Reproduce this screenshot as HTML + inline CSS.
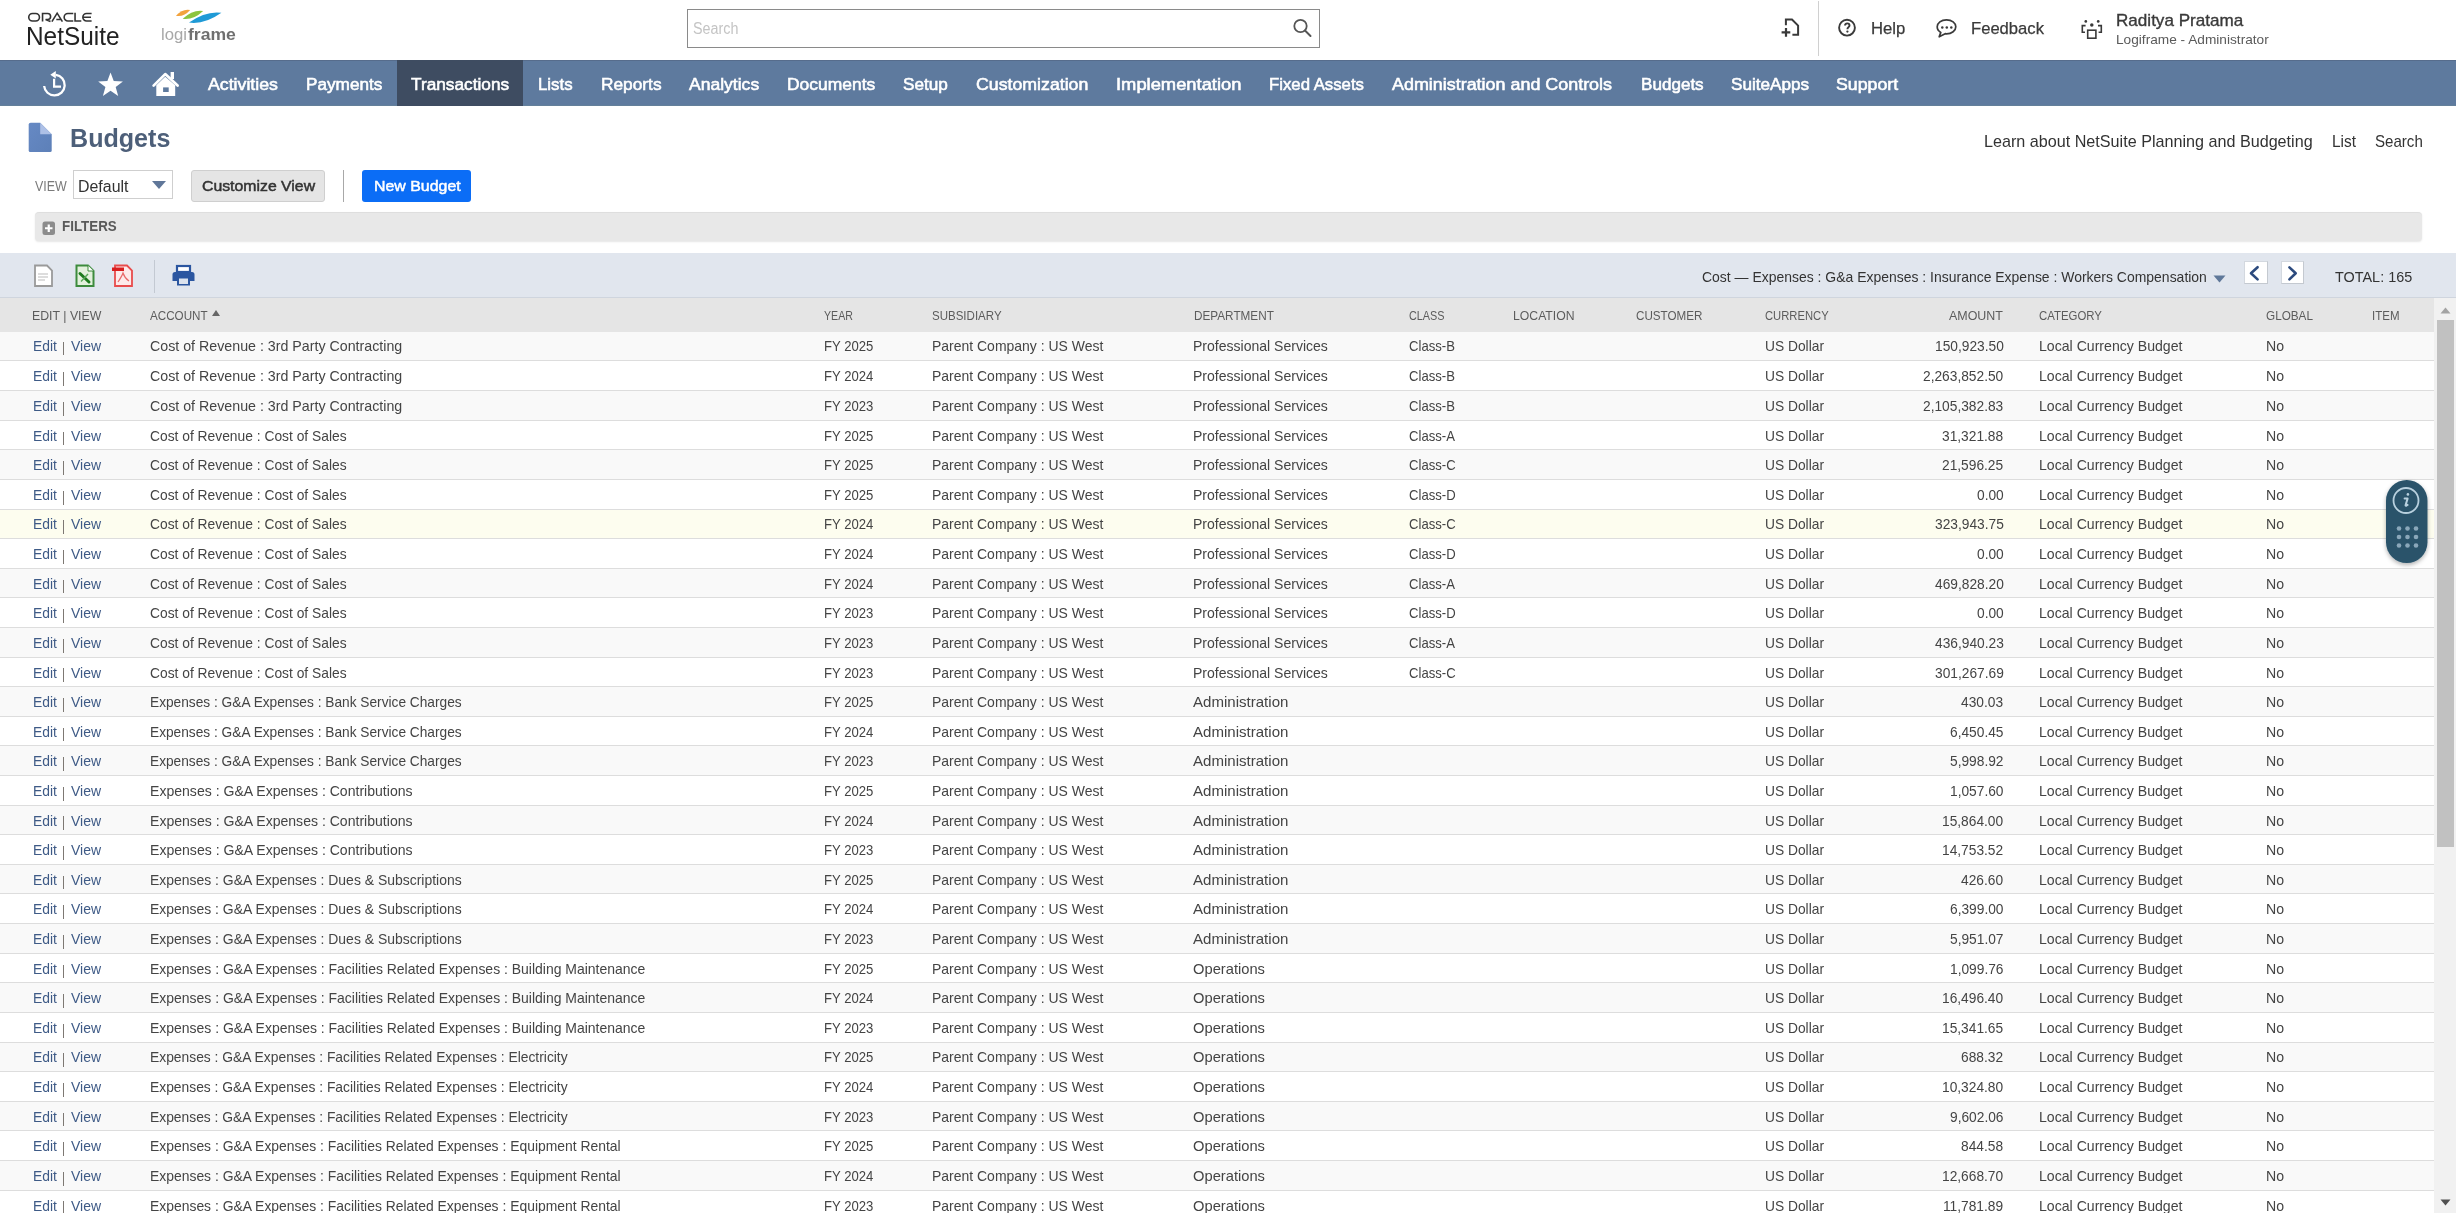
<!DOCTYPE html>
<html><head><meta charset="utf-8"><title>Budgets</title>
<style>
html,body{margin:0;padding:0;background:#fff;width:2457px;height:1213px;overflow:hidden;position:relative}
body{font-family:"Liberation Sans",sans-serif}
.t{position:absolute;white-space:nowrap;transform-origin:0 0;display:block}
.r{position:absolute;display:block}
</style></head><body>
<svg class="r" style="left:27px;top:11px" width="66" height="12" viewBox="0 0 66 12" fill="none" stroke="#333" stroke-width="1.6">
<rect x="1.75" y="2.45" width="10.7" height="7.5" rx="3.75"/>
<path d="M15.55 10.6 V2.45 H20.6 A3 3 0 0 1 20.6 8.45 H18.6 L23.5 10.6"/>
<path d="M24.9 10.6 L30.15 2.2 L35.4 10.6 M29.3 8.5 H33.9"/>
<path d="M46.3 2.45 H40.9 A3.75 3.75 0 0 0 40.9 9.95 H46.3"/>
<path d="M48.05 1.8 V9.95 H54.3"/>
<path d="M64.6 2.45 H59.6 A3.75 3.75 0 0 0 59.6 9.95 H64.6 M56.6 6.2 H64"/>
</svg>
<span class="t" style="left:26.30px;top:22.54px;font-size:26.00px;line-height:26.00px;color:#222;transform:scaleX(0.9377);">NetSuite</span>
<svg class="r" style="left:170px;top:6px" width="60" height="22" viewBox="0 0 60 22"><path d="M5.90 9.80 Q13.56 11.44 20.20 4.00 Q12.54 2.36 5.90 9.80Z" fill="#f2a23c"/><path d="M12.70 12.80 Q23.16 14.38 33.20 5.00 Q22.74 3.42 12.70 12.80Z" fill="#8cc43f"/><path d="M19.00 16.60 Q34.52 18.80 51.40 6.80 Q35.88 4.60 19.00 16.60Z" fill="#1f9ad6"/></svg>
<span class="t" style="left:161.00px;top:25.66px;font-size:16.50px;line-height:16.50px;color:#a8a8a8;transform:scaleX(1.0120);">logi</span>
<span class="t" style="left:187.80px;top:25.66px;font-size:16.50px;line-height:16.50px;font-weight:bold;color:#707070;transform:scaleX(1.0657);">frame</span>
<div class="r" style="left:687px;top:9px;width:633px;height:39px;border:1px solid #8a8a8a;box-sizing:border-box;background:#fff"></div>
<span class="t" style="left:693.00px;top:20.67px;font-size:15.80px;line-height:15.80px;color:#c4c4c4;transform:scaleX(0.9070);">Search</span>
<svg class="r" style="left:1290px;top:16px" width="26" height="26" viewBox="0 0 26 26">
<circle cx="10.5" cy="10" r="6.2" fill="none" stroke="#555" stroke-width="1.8"/>
<line x1="15" y1="14.5" x2="20.5" y2="20" stroke="#555" stroke-width="2" stroke-linecap="round"/></svg>
<svg class="r" style="left:1779px;top:16px" width="24" height="24" viewBox="0 0 24 24">
<path d="M6.9 9.2 V3.5 H13 L19.1 9.6 V18.8 H13.4" fill="none" stroke="#3a3a3a" stroke-width="2" stroke-linejoin="miter"/>
<path d="M2.6 16.4 H11.3 M7 12 V20.8" stroke="#3a3a3a" stroke-width="2.2"/></svg>
<div class="r" style="left:1818px;top:1px;width:1px;height:55px;background:#d0d0d0"></div>
<svg class="r" style="left:1836px;top:17px" width="22" height="22" viewBox="0 0 22 22">
<circle cx="11" cy="10.7" r="7.9" fill="none" stroke="#3a3a3a" stroke-width="1.9"/>
<path d="M9 8.6 C9 7.1 10 6.4 11.2 6.4 C12.6 6.4 13.5 7.2 13.5 8.4 C13.5 10 11.4 10.3 11.4 12.2" fill="none" stroke="#3a3a3a" stroke-width="1.9"/>
<circle cx="11.4" cy="14.6" r="1.15" fill="#3a3a3a"/></svg>
<span class="t" style="left:1871.00px;top:21.14px;font-size:16.60px;line-height:16.60px;-webkit-text-stroke:0.25px #3a3a3a;color:#3a3a3a;transform:scaleX(1.0045);">Help</span>
<svg class="r" style="left:1934px;top:16px" width="26" height="24" viewBox="0 0 26 24">
<path d="M12.5 3.8 C7.2 3.8 3.2 6.9 3.2 10.8 C3.2 13.2 4.6 15.2 6.8 16.4 L5.2 20.8 L11.2 17.7 C11.6 17.75 12 17.8 12.5 17.8 C17.8 17.8 21.8 14.7 21.8 10.8 C21.8 6.9 17.8 3.8 12.5 3.8Z" fill="none" stroke="#3a3a3a" stroke-width="1.7" stroke-linejoin="round"/>
<circle cx="8.3" cy="11.4" r="1.25" fill="#3a3a3a"/><circle cx="12.8" cy="11.4" r="1.25" fill="#3a3a3a"/><circle cx="17.3" cy="11.4" r="1.25" fill="#3a3a3a"/></svg>
<span class="t" style="left:1971.00px;top:21.14px;font-size:16.60px;line-height:16.60px;-webkit-text-stroke:0.25px #3a3a3a;color:#3a3a3a;transform:scaleX(1.0008);">Feedback</span>
<svg class="r" style="left:2079px;top:17px" width="26" height="24" viewBox="0 0 26 24">
<circle cx="6.8" cy="4.4" r="1.35" fill="#3a3a3a"/><circle cx="19.2" cy="4.4" r="1.35" fill="#3a3a3a"/><circle cx="12.8" cy="8.1" r="1.75" fill="#3a3a3a"/>
<path d="M6.6 8.6 H3.3 V15.3 H6 M19 8.6 H22.3 V15.3 H19.6" fill="none" stroke="#3a3a3a" stroke-width="1.6"/>
<rect x="8.7" y="13.2" width="8.2" height="8" fill="none" stroke="#3a3a3a" stroke-width="1.6"/></svg>
<span class="t" style="left:2115.70px;top:11.98px;font-size:16.40px;line-height:16.40px;-webkit-text-stroke:0.35px #3a3a3a;color:#3a3a3a;transform:scaleX(1.0420);">Raditya Pratama</span>
<span class="t" style="left:2115.70px;top:33.55px;font-size:12.80px;line-height:12.80px;color:#5a5a5a;transform:scaleX(1.0686);">Logiframe - Administrator</span>
<div class="r" style="left:0px;top:60px;width:2456px;height:46px;background:#5e7a9e;border-top:1px solid #566c8c;border-bottom:1px solid #64809a;box-sizing:border-box"></div>
<div class="r" style="left:397px;top:60px;width:126px;height:46px;background:#3e4c61"></div>
<svg class="r" style="left:40px;top:68px" width="30" height="32" viewBox="0 0 30 32">
<path d="M4.14 18 A10.3 10.3 0 1 0 15.83 6.9" fill="none" stroke="#fff" stroke-width="2.3"/>
<path d="M10.3 6.8 L15.8 3.0 L15.8 10.6Z" fill="#fff"/>
<path d="M14.1 10.8 V18.7 H21" fill="none" stroke="#fff" stroke-width="2.2"/></svg>
<svg class="r" style="left:96px;top:71px" width="30" height="28" viewBox="0 0 30 28">
<polygon points="14.55,1.40 17.72,10.03 26.91,10.38 19.69,16.07 22.19,24.92 14.55,19.80 6.91,24.92 9.41,16.07 2.19,10.38 11.38,10.03" fill="#fff"/></svg>
<svg class="r" style="left:150px;top:68px" width="32" height="32" viewBox="0 0 32 32">
<rect x="20.6" y="4" width="3.4" height="7" fill="#fff"/>
<path d="M3.6 17.6 L15.2 6.1 L27.6 17.6" fill="none" stroke="#fff" stroke-width="2.7" stroke-linejoin="round" stroke-linecap="round"/>
<path d="M6.3 17.2 L15.2 8.8 L25.2 17.2 V27.9 H6.3Z" fill="#fff"/>
<rect x="13.1" y="19.4" width="5.6" height="4.6" fill="#5e7a9e"/></svg>
<span class="t" style="left:207.60px;top:75.51px;font-size:16.20px;line-height:16.20px;-webkit-text-stroke:0.55px #fff;color:#fff;transform:scaleX(1.0953);">Activities</span>
<span class="t" style="left:306.20px;top:75.51px;font-size:16.20px;line-height:16.20px;-webkit-text-stroke:0.55px #fff;color:#fff;transform:scaleX(1.0607);">Payments</span>
<span class="t" style="left:411.00px;top:75.51px;font-size:16.20px;line-height:16.20px;-webkit-text-stroke:0.55px #fff;color:#fff;transform:scaleX(1.0657);">Transactions</span>
<span class="t" style="left:537.70px;top:75.51px;font-size:16.20px;line-height:16.20px;-webkit-text-stroke:0.55px #fff;color:#fff;transform:scaleX(1.0388);">Lists</span>
<span class="t" style="left:600.50px;top:75.51px;font-size:16.20px;line-height:16.20px;-webkit-text-stroke:0.55px #fff;color:#fff;transform:scaleX(1.0685);">Reports</span>
<span class="t" style="left:688.70px;top:75.51px;font-size:16.20px;line-height:16.20px;-webkit-text-stroke:0.55px #fff;color:#fff;transform:scaleX(1.0831);">Analytics</span>
<span class="t" style="left:787.00px;top:75.51px;font-size:16.20px;line-height:16.20px;-webkit-text-stroke:0.55px #fff;color:#fff;transform:scaleX(1.0776);">Documents</span>
<span class="t" style="left:903.00px;top:75.51px;font-size:16.20px;line-height:16.20px;-webkit-text-stroke:0.55px #fff;color:#fff;transform:scaleX(1.0607);">Setup</span>
<span class="t" style="left:975.50px;top:75.51px;font-size:16.20px;line-height:16.20px;-webkit-text-stroke:0.55px #fff;color:#fff;transform:scaleX(1.0951);">Customization</span>
<span class="t" style="left:1115.50px;top:75.51px;font-size:16.20px;line-height:16.20px;-webkit-text-stroke:0.55px #fff;color:#fff;transform:scaleX(1.1331);">Implementation</span>
<span class="t" style="left:1269.00px;top:75.51px;font-size:16.20px;line-height:16.20px;-webkit-text-stroke:0.55px #fff;color:#fff;transform:scaleX(1.0344);">Fixed Assets</span>
<span class="t" style="left:1391.80px;top:75.51px;font-size:16.20px;line-height:16.20px;-webkit-text-stroke:0.55px #fff;color:#fff;transform:scaleX(1.1065);">Administration and Controls</span>
<span class="t" style="left:1640.50px;top:75.51px;font-size:16.20px;line-height:16.20px;-webkit-text-stroke:0.55px #fff;color:#fff;transform:scaleX(1.0549);">Budgets</span>
<span class="t" style="left:1730.80px;top:75.51px;font-size:16.20px;line-height:16.20px;-webkit-text-stroke:0.55px #fff;color:#fff;transform:scaleX(1.0588);">SuiteApps</span>
<span class="t" style="left:1836.30px;top:75.51px;font-size:16.20px;line-height:16.20px;-webkit-text-stroke:0.55px #fff;color:#fff;transform:scaleX(1.0964);">Support</span>
<svg class="r" style="left:28px;top:122px" width="26" height="32" viewBox="0 0 26 32">
<defs><linearGradient id="dg" x1="0" y1="0" x2="1" y2="1"><stop offset="0" stop-color="#6689c4"/><stop offset="1" stop-color="#5d80b8"/></linearGradient></defs>
<path d="M2.6 0.8 H12.2 L23.7 12.3 V28.4 Q23.7 29.9 22.2 29.9 H2.2 Q0.7 29.9 0.7 28.4 V2.6 Q0.7 0.8 2.6 0.8Z" fill="url(#dg)"/>
<path d="M12.2 0.8 L23.7 12.3 H12.2Z" fill="#adc0e6"/></svg>
<span class="t" style="left:69.80px;top:126.12px;font-size:25.50px;line-height:25.50px;font-weight:bold;color:#4d5f79;transform:scaleX(0.9843);">Budgets</span>
<span class="t" style="left:1983.90px;top:132.91px;font-size:16.20px;line-height:16.20px;color:#333;transform:scaleX(0.9977);">Learn about NetSuite Planning and Budgeting</span>
<span class="t" style="left:2332.00px;top:132.91px;font-size:16.20px;line-height:16.20px;color:#333;transform:scaleX(0.9521);">List</span>
<span class="t" style="left:2375.30px;top:132.91px;font-size:16.20px;line-height:16.20px;color:#333;transform:scaleX(0.9314);">Search</span>
<span class="t" style="left:34.60px;top:179.36px;font-size:14.00px;line-height:14.00px;color:#7a7a7a;transform:scaleX(0.8887);">VIEW</span>
<div class="r" style="left:73px;top:170px;width:100px;height:29px;border:1px solid #cfcfcf;box-sizing:border-box;background:#fff"></div>
<span class="t" style="left:78.20px;top:178.80px;font-size:15.60px;line-height:15.60px;color:#333;transform:scaleX(1.0218);">Default</span>
<svg class="r" style="left:151px;top:180px" width="16" height="10" viewBox="0 0 16 10"><path d="M1 1 H15 L8 9Z" fill="#607799"/></svg>
<div class="r" style="left:191px;top:170px;width:134px;height:32px;background:#e5e5e5;border:1px solid #cfcfcf;box-sizing:border-box;border-radius:3px"></div>
<span class="t" style="left:201.70px;top:178.34px;font-size:15.40px;line-height:15.40px;-webkit-text-stroke:0.5px #333;color:#333;transform:scaleX(1.0275);">Customize View</span>
<div class="r" style="left:343px;top:170px;width:1px;height:32px;background:#a8a8a8"></div>
<div class="r" style="left:362px;top:170px;width:109px;height:32px;background:#0b6df6;border-radius:3px"></div>
<span class="t" style="left:373.50px;top:178.34px;font-size:15.40px;line-height:15.40px;-webkit-text-stroke:0.5px #fff;color:#fff;transform:scaleX(1.0334);">New Budget</span>
<div class="r" style="left:35px;top:212px;width:2387px;height:29px;background:#e8e8e8;border-radius:4px;border-top:1px solid #dedede;box-sizing:border-box;box-shadow:0 1px 2px rgba(0,0,0,0.10)"></div>
<svg class="r" style="left:42px;top:221px" width="14" height="15" viewBox="0 0 14 15">
<rect x="0.5" y="0.5" width="12.5" height="13.5" rx="2.5" fill="#8c8c8c"/>
<path d="M6.75 3.5 V11 M3 7.25 H10.5" stroke="#fff" stroke-width="2.2"/></svg>
<span class="t" style="left:62.30px;top:219.06px;font-size:14.60px;line-height:14.60px;font-weight:bold;color:#5a5a5a;transform:scaleX(0.9173);">FILTERS</span>
<div class="r" style="left:0px;top:253px;width:2456px;height:45px;background:#e1e6ee;border-bottom:1px solid #cfd5de;box-sizing:border-box"></div>
<svg class="r" style="left:33px;top:264px" width="22" height="24" viewBox="0 0 22 24">
<path d="M2 1.5 H14 L19 6.5 V22 H2Z" fill="#fff" stroke="#9a9a9a" stroke-width="1.8"/>
<path d="M5 10 H15 M5 13 H15 M5 16 H12" stroke="#bbb" stroke-width="1"/></svg>
<svg class="r" style="left:74px;top:264px" width="22" height="24" viewBox="0 0 22 24">
<path d="M2.5 1.5 H14 L19.5 7 V22 H2.5Z" fill="#e3f1dc" stroke="#3d8b3d" stroke-width="2"/>
<path d="M14 1.5 V7 H19.5" fill="#fff" stroke="#3d8b3d" stroke-width="1"/>
<path d="M6 9.5 L15 18" stroke="#1d7a1d" stroke-width="3" stroke-linecap="round"/>
<path d="M14 10 L7 17.5" stroke="#5aa85a" stroke-width="1.4"/></svg>
<svg class="r" style="left:111px;top:264px" width="24" height="24" viewBox="0 0 24 24">
<path d="M4 1.5 H16 L21 6.5 V22 H4Z" fill="#fdeaea" stroke="#e84c4c" stroke-width="1.8"/>
<rect x="1" y="3.5" width="12" height="3.5" fill="#d91e1e"/>
<path d="M7 18 C9 15 11 12 12 9 C13 12 15 15 18 17" fill="none" stroke="#e86a6a" stroke-width="1.2"/></svg>
<div class="r" style="left:154px;top:260px;width:1px;height:33px;background:#c3c9d2"></div>
<svg class="r" style="left:171px;top:264px" width="25" height="24" viewBox="0 0 25 24">
<rect x="6" y="2" width="13" height="6" fill="#fff" stroke="#2b56a0" stroke-width="2.2"/>
<path d="M4 8 H21 Q23.5 8 23.5 10.5 V17 H19 V21.5 H6 V17 H1.5 V10.5 Q1.5 8 4 8Z" fill="#2b56a0"/>
<rect x="8" y="14.5" width="9" height="5.5" fill="#dce3ee"/></svg>
<span class="t" style="left:1701.60px;top:269.70px;font-size:14.40px;line-height:14.40px;color:#333;transform:scaleX(0.9701);">Cost — Expenses : G&amp;a Expenses : Insurance Expense : Workers Compensation</span>
<svg class="r" style="left:2213px;top:275px" width="13" height="8" viewBox="0 0 13 8"><path d="M0.5 0.5 H12.5 L6.5 7.5Z" fill="#5f7899"/></svg>
<div class="r" style="left:2244px;top:261px;width:24px;height:23px;background:#fff;border:1px solid #d3d8df;border-right-color:#c4c9d0;border-bottom-color:#c4c9d0;box-sizing:border-box"></div>
<div class="r" style="left:2281px;top:261px;width:23px;height:23px;background:#fff;border:1px solid #d3d8df;border-right-color:#c4c9d0;border-bottom-color:#c4c9d0;box-sizing:border-box"></div>
<svg class="r" style="left:2240px;top:260px" width="28" height="26" viewBox="0 0 28 26"><path d="M17.6 7.2 L11 13.3 L17.6 19.4" fill="none" stroke="#2c4a7e" stroke-width="2.6" stroke-linecap="round" stroke-linejoin="round"/></svg>
<svg class="r" style="left:2280px;top:260px" width="28" height="26" viewBox="0 0 28 26"><path d="M9.4 7.4 L15.7 13.3 L9.4 19.4" fill="none" stroke="#2c4a7e" stroke-width="2.6" stroke-linecap="round" stroke-linejoin="round"/></svg>
<span class="t" style="left:2334.80px;top:269.00px;font-size:15.00px;line-height:15.00px;color:#333;transform:scaleX(0.9611);">TOTAL: 165</span>
<div class="r" style="left:0px;top:298px;width:2434px;height:34px;background:#e5e5e5"></div>
<span class="t" style="left:32.20px;top:310.18px;font-size:12.60px;line-height:12.60px;color:#5c5c5c;transform:scaleX(0.9781);">EDIT | VIEW</span>
<span class="t" style="left:150.40px;top:310.18px;font-size:12.60px;line-height:12.60px;color:#5c5c5c;transform:scaleX(0.9246);">ACCOUNT</span>
<span class="t" style="left:824.40px;top:310.18px;font-size:12.60px;line-height:12.60px;color:#5c5c5c;transform:scaleX(0.8423);">YEAR</span>
<span class="t" style="left:931.90px;top:310.18px;font-size:12.60px;line-height:12.60px;color:#5c5c5c;transform:scaleX(0.9147);">SUBSIDIARY</span>
<span class="t" style="left:1193.80px;top:310.18px;font-size:12.60px;line-height:12.60px;color:#5c5c5c;transform:scaleX(0.9330);">DEPARTMENT</span>
<span class="t" style="left:1409.10px;top:310.18px;font-size:12.60px;line-height:12.60px;color:#5c5c5c;transform:scaleX(0.8617);">CLASS</span>
<span class="t" style="left:1512.70px;top:310.18px;font-size:12.60px;line-height:12.60px;color:#5c5c5c;transform:scaleX(0.9704);">LOCATION</span>
<span class="t" style="left:1636.00px;top:310.18px;font-size:12.60px;line-height:12.60px;color:#5c5c5c;transform:scaleX(0.9253);">CUSTOMER</span>
<span class="t" style="left:1765.00px;top:310.18px;font-size:12.60px;line-height:12.60px;color:#5c5c5c;transform:scaleX(0.8921);">CURRENCY</span>
<span class="t" style="left:1949.30px;top:310.18px;font-size:12.60px;line-height:12.60px;color:#5c5c5c;transform:scaleX(0.9891);">AMOUNT</span>
<span class="t" style="left:2039.00px;top:310.18px;font-size:12.60px;line-height:12.60px;color:#5c5c5c;transform:scaleX(0.9058);">CATEGORY</span>
<span class="t" style="left:2266.30px;top:310.18px;font-size:12.60px;line-height:12.60px;color:#5c5c5c;transform:scaleX(0.9321);">GLOBAL</span>
<span class="t" style="left:2371.50px;top:310.18px;font-size:12.60px;line-height:12.60px;color:#5c5c5c;transform:scaleX(0.9136);">ITEM</span>
<svg class="r" style="left:211px;top:309px" width="10" height="8" viewBox="0 0 10 8"><path d="M1 7 L5 1 L9 7Z" fill="#666"/></svg>
<div class="r" style="left:0px;top:332px;width:2434px;height:29px;background:#f9f9f9"></div>
<div class="r" style="left:0px;top:361px;width:2434px;height:30px;background:#ffffff"></div>
<div class="r" style="left:0px;top:391px;width:2434px;height:29px;background:#f9f9f9"></div>
<div class="r" style="left:0px;top:420px;width:2434px;height:30px;background:#ffffff"></div>
<div class="r" style="left:0px;top:450px;width:2434px;height:29px;background:#f9f9f9"></div>
<div class="r" style="left:0px;top:480px;width:2434px;height:29px;background:#ffffff"></div>
<div class="r" style="left:0px;top:509px;width:2434px;height:30px;background:#fdfdef"></div>
<div class="r" style="left:0px;top:539px;width:2434px;height:29px;background:#ffffff"></div>
<div class="r" style="left:0px;top:568px;width:2434px;height:30px;background:#f9f9f9"></div>
<div class="r" style="left:0px;top:598px;width:2434px;height:29px;background:#ffffff"></div>
<div class="r" style="left:0px;top:628px;width:2434px;height:29px;background:#f9f9f9"></div>
<div class="r" style="left:0px;top:657px;width:2434px;height:30px;background:#ffffff"></div>
<div class="r" style="left:0px;top:687px;width:2434px;height:29px;background:#f9f9f9"></div>
<div class="r" style="left:0px;top:717px;width:2434px;height:29px;background:#ffffff"></div>
<div class="r" style="left:0px;top:746px;width:2434px;height:30px;background:#f9f9f9"></div>
<div class="r" style="left:0px;top:776px;width:2434px;height:29px;background:#ffffff"></div>
<div class="r" style="left:0px;top:805px;width:2434px;height:30px;background:#f9f9f9"></div>
<div class="r" style="left:0px;top:835px;width:2434px;height:29px;background:#ffffff"></div>
<div class="r" style="left:0px;top:865px;width:2434px;height:29px;background:#f9f9f9"></div>
<div class="r" style="left:0px;top:894px;width:2434px;height:30px;background:#ffffff"></div>
<div class="r" style="left:0px;top:924px;width:2434px;height:29px;background:#f9f9f9"></div>
<div class="r" style="left:0px;top:953px;width:2434px;height:30px;background:#ffffff"></div>
<div class="r" style="left:0px;top:983px;width:2434px;height:29px;background:#f9f9f9"></div>
<div class="r" style="left:0px;top:1013px;width:2434px;height:29px;background:#ffffff"></div>
<div class="r" style="left:0px;top:1042px;width:2434px;height:30px;background:#f9f9f9"></div>
<div class="r" style="left:0px;top:1072px;width:2434px;height:29px;background:#ffffff"></div>
<div class="r" style="left:0px;top:1101px;width:2434px;height:30px;background:#f9f9f9"></div>
<div class="r" style="left:0px;top:1131px;width:2434px;height:29px;background:#ffffff"></div>
<div class="r" style="left:0px;top:1161px;width:2434px;height:29px;background:#f9f9f9"></div>
<div class="r" style="left:0px;top:1190px;width:2434px;height:30px;background:#ffffff"></div>
<div class="r" style="left:0px;top:360px;width:2434px;height:1px;background:#dddddd"></div>
<div class="r" style="left:0px;top:390px;width:2434px;height:1px;background:#dddddd"></div>
<div class="r" style="left:0px;top:420px;width:2434px;height:1px;background:#dddddd"></div>
<div class="r" style="left:0px;top:449px;width:2434px;height:1px;background:#dddddd"></div>
<div class="r" style="left:0px;top:479px;width:2434px;height:1px;background:#dddddd"></div>
<div class="r" style="left:0px;top:509px;width:2434px;height:1px;background:#dddddd"></div>
<div class="r" style="left:0px;top:538px;width:2434px;height:1px;background:#dddddd"></div>
<div class="r" style="left:0px;top:568px;width:2434px;height:1px;background:#dddddd"></div>
<div class="r" style="left:0px;top:597px;width:2434px;height:1px;background:#dddddd"></div>
<div class="r" style="left:0px;top:627px;width:2434px;height:1px;background:#dddddd"></div>
<div class="r" style="left:0px;top:657px;width:2434px;height:1px;background:#dddddd"></div>
<div class="r" style="left:0px;top:686px;width:2434px;height:1px;background:#dddddd"></div>
<div class="r" style="left:0px;top:716px;width:2434px;height:1px;background:#dddddd"></div>
<div class="r" style="left:0px;top:745px;width:2434px;height:1px;background:#dddddd"></div>
<div class="r" style="left:0px;top:775px;width:2434px;height:1px;background:#dddddd"></div>
<div class="r" style="left:0px;top:805px;width:2434px;height:1px;background:#dddddd"></div>
<div class="r" style="left:0px;top:834px;width:2434px;height:1px;background:#dddddd"></div>
<div class="r" style="left:0px;top:864px;width:2434px;height:1px;background:#dddddd"></div>
<div class="r" style="left:0px;top:893px;width:2434px;height:1px;background:#dddddd"></div>
<div class="r" style="left:0px;top:923px;width:2434px;height:1px;background:#dddddd"></div>
<div class="r" style="left:0px;top:953px;width:2434px;height:1px;background:#dddddd"></div>
<div class="r" style="left:0px;top:982px;width:2434px;height:1px;background:#dddddd"></div>
<div class="r" style="left:0px;top:1012px;width:2434px;height:1px;background:#dddddd"></div>
<div class="r" style="left:0px;top:1042px;width:2434px;height:1px;background:#dddddd"></div>
<div class="r" style="left:0px;top:1071px;width:2434px;height:1px;background:#dddddd"></div>
<div class="r" style="left:0px;top:1101px;width:2434px;height:1px;background:#dddddd"></div>
<div class="r" style="left:0px;top:1130px;width:2434px;height:1px;background:#dddddd"></div>
<div class="r" style="left:0px;top:1160px;width:2434px;height:1px;background:#dddddd"></div>
<div class="r" style="left:0px;top:1190px;width:2434px;height:1px;background:#dddddd"></div>
<div class="r" style="left:0px;top:1219px;width:2434px;height:1px;background:#dddddd"></div>
<span class="t" style="left:32.60px;top:338.63px;font-size:14.80px;line-height:14.80px;color:#3e5a86;transform:scaleX(0.9372);">Edit</span>
<div class="r" style="left:63.2px;top:341.50px;width:1.3px;height:13.8px;background:#7d7873"></div>
<span class="t" style="left:71.30px;top:338.63px;font-size:14.80px;line-height:14.80px;color:#3e5a86;transform:scaleX(0.9451);">View</span>
<span class="t" style="left:150.30px;top:338.63px;font-size:14.80px;line-height:14.80px;color:#444444;transform:scaleX(0.9614);">Cost of Revenue : 3rd Party Contracting</span>
<span class="t" style="left:824.40px;top:338.63px;font-size:14.80px;line-height:14.80px;color:#444444;transform:scaleX(0.8855);">FY 2025</span>
<span class="t" style="left:931.90px;top:338.63px;font-size:14.80px;line-height:14.80px;color:#444444;transform:scaleX(0.9438);">Parent Company : US West</span>
<span class="t" style="left:1193.00px;top:338.63px;font-size:14.80px;line-height:14.80px;color:#444444;transform:scaleX(0.9480);">Professional Services</span>
<span class="t" style="left:1409.10px;top:338.63px;font-size:14.80px;line-height:14.80px;color:#444444;transform:scaleX(0.8858);">Class-B</span>
<span class="t" style="left:1765.00px;top:338.63px;font-size:14.80px;line-height:14.80px;color:#444444;transform:scaleX(0.9316);">US Dollar</span>
<span class="t" style="left:1934.50px;top:338.63px;font-size:14.80px;line-height:14.80px;color:#444444;transform:scaleX(0.9288);">150,923.50</span>
<span class="t" style="left:2039.00px;top:338.63px;font-size:14.80px;line-height:14.80px;color:#444444;transform:scaleX(0.9532);">Local Currency Budget</span>
<span class="t" style="left:2266.30px;top:338.63px;font-size:14.80px;line-height:14.80px;color:#444444;transform:scaleX(0.9527);">No</span>
<span class="t" style="left:32.60px;top:369.44px;font-size:14.80px;line-height:14.80px;color:#3e5a86;transform:scaleX(0.9372);">Edit</span>
<div class="r" style="left:63.2px;top:372.31px;width:1.3px;height:13.8px;background:#7d7873"></div>
<span class="t" style="left:71.30px;top:369.44px;font-size:14.80px;line-height:14.80px;color:#3e5a86;transform:scaleX(0.9451);">View</span>
<span class="t" style="left:150.30px;top:369.44px;font-size:14.80px;line-height:14.80px;color:#444444;transform:scaleX(0.9614);">Cost of Revenue : 3rd Party Contracting</span>
<span class="t" style="left:824.40px;top:369.44px;font-size:14.80px;line-height:14.80px;color:#444444;transform:scaleX(0.8855);">FY 2024</span>
<span class="t" style="left:931.90px;top:369.44px;font-size:14.80px;line-height:14.80px;color:#444444;transform:scaleX(0.9438);">Parent Company : US West</span>
<span class="t" style="left:1193.00px;top:369.44px;font-size:14.80px;line-height:14.80px;color:#444444;transform:scaleX(0.9480);">Professional Services</span>
<span class="t" style="left:1409.10px;top:369.44px;font-size:14.80px;line-height:14.80px;color:#444444;transform:scaleX(0.8858);">Class-B</span>
<span class="t" style="left:1765.00px;top:369.44px;font-size:14.80px;line-height:14.80px;color:#444444;transform:scaleX(0.9316);">US Dollar</span>
<span class="t" style="left:1923.04px;top:369.44px;font-size:14.80px;line-height:14.80px;color:#444444;transform:scaleX(0.9288);">2,263,852.50</span>
<span class="t" style="left:2039.00px;top:369.44px;font-size:14.80px;line-height:14.80px;color:#444444;transform:scaleX(0.9532);">Local Currency Budget</span>
<span class="t" style="left:2266.30px;top:369.44px;font-size:14.80px;line-height:14.80px;color:#444444;transform:scaleX(0.9527);">No</span>
<span class="t" style="left:32.60px;top:399.05px;font-size:14.80px;line-height:14.80px;color:#3e5a86;transform:scaleX(0.9372);">Edit</span>
<div class="r" style="left:63.2px;top:401.92px;width:1.3px;height:13.8px;background:#7d7873"></div>
<span class="t" style="left:71.30px;top:399.05px;font-size:14.80px;line-height:14.80px;color:#3e5a86;transform:scaleX(0.9451);">View</span>
<span class="t" style="left:150.30px;top:399.05px;font-size:14.80px;line-height:14.80px;color:#444444;transform:scaleX(0.9614);">Cost of Revenue : 3rd Party Contracting</span>
<span class="t" style="left:824.40px;top:399.05px;font-size:14.80px;line-height:14.80px;color:#444444;transform:scaleX(0.8855);">FY 2023</span>
<span class="t" style="left:931.90px;top:399.05px;font-size:14.80px;line-height:14.80px;color:#444444;transform:scaleX(0.9438);">Parent Company : US West</span>
<span class="t" style="left:1193.00px;top:399.05px;font-size:14.80px;line-height:14.80px;color:#444444;transform:scaleX(0.9480);">Professional Services</span>
<span class="t" style="left:1409.10px;top:399.05px;font-size:14.80px;line-height:14.80px;color:#444444;transform:scaleX(0.8858);">Class-B</span>
<span class="t" style="left:1765.00px;top:399.05px;font-size:14.80px;line-height:14.80px;color:#444444;transform:scaleX(0.9316);">US Dollar</span>
<span class="t" style="left:1923.04px;top:399.05px;font-size:14.80px;line-height:14.80px;color:#444444;transform:scaleX(0.9288);">2,105,382.83</span>
<span class="t" style="left:2039.00px;top:399.05px;font-size:14.80px;line-height:14.80px;color:#444444;transform:scaleX(0.9532);">Local Currency Budget</span>
<span class="t" style="left:2266.30px;top:399.05px;font-size:14.80px;line-height:14.80px;color:#444444;transform:scaleX(0.9527);">No</span>
<span class="t" style="left:32.60px;top:428.66px;font-size:14.80px;line-height:14.80px;color:#3e5a86;transform:scaleX(0.9372);">Edit</span>
<div class="r" style="left:63.2px;top:431.53px;width:1.3px;height:13.8px;background:#7d7873"></div>
<span class="t" style="left:71.30px;top:428.66px;font-size:14.80px;line-height:14.80px;color:#3e5a86;transform:scaleX(0.9451);">View</span>
<span class="t" style="left:150.30px;top:428.66px;font-size:14.80px;line-height:14.80px;color:#444444;transform:scaleX(0.9335);">Cost of Revenue : Cost of Sales</span>
<span class="t" style="left:824.40px;top:428.66px;font-size:14.80px;line-height:14.80px;color:#444444;transform:scaleX(0.8855);">FY 2025</span>
<span class="t" style="left:931.90px;top:428.66px;font-size:14.80px;line-height:14.80px;color:#444444;transform:scaleX(0.9438);">Parent Company : US West</span>
<span class="t" style="left:1193.00px;top:428.66px;font-size:14.80px;line-height:14.80px;color:#444444;transform:scaleX(0.9480);">Professional Services</span>
<span class="t" style="left:1409.10px;top:428.66px;font-size:14.80px;line-height:14.80px;color:#444444;transform:scaleX(0.8858);">Class-A</span>
<span class="t" style="left:1765.00px;top:428.66px;font-size:14.80px;line-height:14.80px;color:#444444;transform:scaleX(0.9316);">US Dollar</span>
<span class="t" style="left:1942.14px;top:428.66px;font-size:14.80px;line-height:14.80px;color:#444444;transform:scaleX(0.9288);">31,321.88</span>
<span class="t" style="left:2039.00px;top:428.66px;font-size:14.80px;line-height:14.80px;color:#444444;transform:scaleX(0.9532);">Local Currency Budget</span>
<span class="t" style="left:2266.30px;top:428.66px;font-size:14.80px;line-height:14.80px;color:#444444;transform:scaleX(0.9527);">No</span>
<span class="t" style="left:32.60px;top:458.27px;font-size:14.80px;line-height:14.80px;color:#3e5a86;transform:scaleX(0.9372);">Edit</span>
<div class="r" style="left:63.2px;top:461.14px;width:1.3px;height:13.8px;background:#7d7873"></div>
<span class="t" style="left:71.30px;top:458.27px;font-size:14.80px;line-height:14.80px;color:#3e5a86;transform:scaleX(0.9451);">View</span>
<span class="t" style="left:150.30px;top:458.27px;font-size:14.80px;line-height:14.80px;color:#444444;transform:scaleX(0.9335);">Cost of Revenue : Cost of Sales</span>
<span class="t" style="left:824.40px;top:458.27px;font-size:14.80px;line-height:14.80px;color:#444444;transform:scaleX(0.8855);">FY 2025</span>
<span class="t" style="left:931.90px;top:458.27px;font-size:14.80px;line-height:14.80px;color:#444444;transform:scaleX(0.9438);">Parent Company : US West</span>
<span class="t" style="left:1193.00px;top:458.27px;font-size:14.80px;line-height:14.80px;color:#444444;transform:scaleX(0.9480);">Professional Services</span>
<span class="t" style="left:1409.10px;top:458.27px;font-size:14.80px;line-height:14.80px;color:#444444;transform:scaleX(0.8858);">Class-C</span>
<span class="t" style="left:1765.00px;top:458.27px;font-size:14.80px;line-height:14.80px;color:#444444;transform:scaleX(0.9316);">US Dollar</span>
<span class="t" style="left:1942.14px;top:458.27px;font-size:14.80px;line-height:14.80px;color:#444444;transform:scaleX(0.9288);">21,596.25</span>
<span class="t" style="left:2039.00px;top:458.27px;font-size:14.80px;line-height:14.80px;color:#444444;transform:scaleX(0.9532);">Local Currency Budget</span>
<span class="t" style="left:2266.30px;top:458.27px;font-size:14.80px;line-height:14.80px;color:#444444;transform:scaleX(0.9527);">No</span>
<span class="t" style="left:32.60px;top:487.88px;font-size:14.80px;line-height:14.80px;color:#3e5a86;transform:scaleX(0.9372);">Edit</span>
<div class="r" style="left:63.2px;top:490.75px;width:1.3px;height:13.8px;background:#7d7873"></div>
<span class="t" style="left:71.30px;top:487.88px;font-size:14.80px;line-height:14.80px;color:#3e5a86;transform:scaleX(0.9451);">View</span>
<span class="t" style="left:150.30px;top:487.88px;font-size:14.80px;line-height:14.80px;color:#444444;transform:scaleX(0.9335);">Cost of Revenue : Cost of Sales</span>
<span class="t" style="left:824.40px;top:487.88px;font-size:14.80px;line-height:14.80px;color:#444444;transform:scaleX(0.8855);">FY 2025</span>
<span class="t" style="left:931.90px;top:487.88px;font-size:14.80px;line-height:14.80px;color:#444444;transform:scaleX(0.9438);">Parent Company : US West</span>
<span class="t" style="left:1193.00px;top:487.88px;font-size:14.80px;line-height:14.80px;color:#444444;transform:scaleX(0.9480);">Professional Services</span>
<span class="t" style="left:1409.10px;top:487.88px;font-size:14.80px;line-height:14.80px;color:#444444;transform:scaleX(0.8858);">Class-D</span>
<span class="t" style="left:1765.00px;top:487.88px;font-size:14.80px;line-height:14.80px;color:#444444;transform:scaleX(0.9316);">US Dollar</span>
<span class="t" style="left:1976.55px;top:487.88px;font-size:14.80px;line-height:14.80px;color:#444444;transform:scaleX(0.9288);">0.00</span>
<span class="t" style="left:2039.00px;top:487.88px;font-size:14.80px;line-height:14.80px;color:#444444;transform:scaleX(0.9532);">Local Currency Budget</span>
<span class="t" style="left:2266.30px;top:487.88px;font-size:14.80px;line-height:14.80px;color:#444444;transform:scaleX(0.9527);">No</span>
<span class="t" style="left:32.60px;top:517.49px;font-size:14.80px;line-height:14.80px;color:#3e5a86;transform:scaleX(0.9372);">Edit</span>
<div class="r" style="left:63.2px;top:520.36px;width:1.3px;height:13.8px;background:#7d7873"></div>
<span class="t" style="left:71.30px;top:517.49px;font-size:14.80px;line-height:14.80px;color:#3e5a86;transform:scaleX(0.9451);">View</span>
<span class="t" style="left:150.30px;top:517.49px;font-size:14.80px;line-height:14.80px;color:#444444;transform:scaleX(0.9335);">Cost of Revenue : Cost of Sales</span>
<span class="t" style="left:824.40px;top:517.49px;font-size:14.80px;line-height:14.80px;color:#444444;transform:scaleX(0.8855);">FY 2024</span>
<span class="t" style="left:931.90px;top:517.49px;font-size:14.80px;line-height:14.80px;color:#444444;transform:scaleX(0.9438);">Parent Company : US West</span>
<span class="t" style="left:1193.00px;top:517.49px;font-size:14.80px;line-height:14.80px;color:#444444;transform:scaleX(0.9480);">Professional Services</span>
<span class="t" style="left:1409.10px;top:517.49px;font-size:14.80px;line-height:14.80px;color:#444444;transform:scaleX(0.8858);">Class-C</span>
<span class="t" style="left:1765.00px;top:517.49px;font-size:14.80px;line-height:14.80px;color:#444444;transform:scaleX(0.9316);">US Dollar</span>
<span class="t" style="left:1934.50px;top:517.49px;font-size:14.80px;line-height:14.80px;color:#444444;transform:scaleX(0.9288);">323,943.75</span>
<span class="t" style="left:2039.00px;top:517.49px;font-size:14.80px;line-height:14.80px;color:#444444;transform:scaleX(0.9532);">Local Currency Budget</span>
<span class="t" style="left:2266.30px;top:517.49px;font-size:14.80px;line-height:14.80px;color:#444444;transform:scaleX(0.9527);">No</span>
<span class="t" style="left:32.60px;top:547.10px;font-size:14.80px;line-height:14.80px;color:#3e5a86;transform:scaleX(0.9372);">Edit</span>
<div class="r" style="left:63.2px;top:549.97px;width:1.3px;height:13.8px;background:#7d7873"></div>
<span class="t" style="left:71.30px;top:547.10px;font-size:14.80px;line-height:14.80px;color:#3e5a86;transform:scaleX(0.9451);">View</span>
<span class="t" style="left:150.30px;top:547.10px;font-size:14.80px;line-height:14.80px;color:#444444;transform:scaleX(0.9335);">Cost of Revenue : Cost of Sales</span>
<span class="t" style="left:824.40px;top:547.10px;font-size:14.80px;line-height:14.80px;color:#444444;transform:scaleX(0.8855);">FY 2024</span>
<span class="t" style="left:931.90px;top:547.10px;font-size:14.80px;line-height:14.80px;color:#444444;transform:scaleX(0.9438);">Parent Company : US West</span>
<span class="t" style="left:1193.00px;top:547.10px;font-size:14.80px;line-height:14.80px;color:#444444;transform:scaleX(0.9480);">Professional Services</span>
<span class="t" style="left:1409.10px;top:547.10px;font-size:14.80px;line-height:14.80px;color:#444444;transform:scaleX(0.8858);">Class-D</span>
<span class="t" style="left:1765.00px;top:547.10px;font-size:14.80px;line-height:14.80px;color:#444444;transform:scaleX(0.9316);">US Dollar</span>
<span class="t" style="left:1976.55px;top:547.10px;font-size:14.80px;line-height:14.80px;color:#444444;transform:scaleX(0.9288);">0.00</span>
<span class="t" style="left:2039.00px;top:547.10px;font-size:14.80px;line-height:14.80px;color:#444444;transform:scaleX(0.9532);">Local Currency Budget</span>
<span class="t" style="left:2266.30px;top:547.10px;font-size:14.80px;line-height:14.80px;color:#444444;transform:scaleX(0.9527);">No</span>
<span class="t" style="left:32.60px;top:576.71px;font-size:14.80px;line-height:14.80px;color:#3e5a86;transform:scaleX(0.9372);">Edit</span>
<div class="r" style="left:63.2px;top:579.58px;width:1.3px;height:13.8px;background:#7d7873"></div>
<span class="t" style="left:71.30px;top:576.71px;font-size:14.80px;line-height:14.80px;color:#3e5a86;transform:scaleX(0.9451);">View</span>
<span class="t" style="left:150.30px;top:576.71px;font-size:14.80px;line-height:14.80px;color:#444444;transform:scaleX(0.9335);">Cost of Revenue : Cost of Sales</span>
<span class="t" style="left:824.40px;top:576.71px;font-size:14.80px;line-height:14.80px;color:#444444;transform:scaleX(0.8855);">FY 2024</span>
<span class="t" style="left:931.90px;top:576.71px;font-size:14.80px;line-height:14.80px;color:#444444;transform:scaleX(0.9438);">Parent Company : US West</span>
<span class="t" style="left:1193.00px;top:576.71px;font-size:14.80px;line-height:14.80px;color:#444444;transform:scaleX(0.9480);">Professional Services</span>
<span class="t" style="left:1409.10px;top:576.71px;font-size:14.80px;line-height:14.80px;color:#444444;transform:scaleX(0.8858);">Class-A</span>
<span class="t" style="left:1765.00px;top:576.71px;font-size:14.80px;line-height:14.80px;color:#444444;transform:scaleX(0.9316);">US Dollar</span>
<span class="t" style="left:1934.50px;top:576.71px;font-size:14.80px;line-height:14.80px;color:#444444;transform:scaleX(0.9288);">469,828.20</span>
<span class="t" style="left:2039.00px;top:576.71px;font-size:14.80px;line-height:14.80px;color:#444444;transform:scaleX(0.9532);">Local Currency Budget</span>
<span class="t" style="left:2266.30px;top:576.71px;font-size:14.80px;line-height:14.80px;color:#444444;transform:scaleX(0.9527);">No</span>
<span class="t" style="left:32.60px;top:606.32px;font-size:14.80px;line-height:14.80px;color:#3e5a86;transform:scaleX(0.9372);">Edit</span>
<div class="r" style="left:63.2px;top:609.19px;width:1.3px;height:13.8px;background:#7d7873"></div>
<span class="t" style="left:71.30px;top:606.32px;font-size:14.80px;line-height:14.80px;color:#3e5a86;transform:scaleX(0.9451);">View</span>
<span class="t" style="left:150.30px;top:606.32px;font-size:14.80px;line-height:14.80px;color:#444444;transform:scaleX(0.9335);">Cost of Revenue : Cost of Sales</span>
<span class="t" style="left:824.40px;top:606.32px;font-size:14.80px;line-height:14.80px;color:#444444;transform:scaleX(0.8855);">FY 2023</span>
<span class="t" style="left:931.90px;top:606.32px;font-size:14.80px;line-height:14.80px;color:#444444;transform:scaleX(0.9438);">Parent Company : US West</span>
<span class="t" style="left:1193.00px;top:606.32px;font-size:14.80px;line-height:14.80px;color:#444444;transform:scaleX(0.9480);">Professional Services</span>
<span class="t" style="left:1409.10px;top:606.32px;font-size:14.80px;line-height:14.80px;color:#444444;transform:scaleX(0.8858);">Class-D</span>
<span class="t" style="left:1765.00px;top:606.32px;font-size:14.80px;line-height:14.80px;color:#444444;transform:scaleX(0.9316);">US Dollar</span>
<span class="t" style="left:1976.55px;top:606.32px;font-size:14.80px;line-height:14.80px;color:#444444;transform:scaleX(0.9288);">0.00</span>
<span class="t" style="left:2039.00px;top:606.32px;font-size:14.80px;line-height:14.80px;color:#444444;transform:scaleX(0.9532);">Local Currency Budget</span>
<span class="t" style="left:2266.30px;top:606.32px;font-size:14.80px;line-height:14.80px;color:#444444;transform:scaleX(0.9527);">No</span>
<span class="t" style="left:32.60px;top:635.93px;font-size:14.80px;line-height:14.80px;color:#3e5a86;transform:scaleX(0.9372);">Edit</span>
<div class="r" style="left:63.2px;top:638.80px;width:1.3px;height:13.8px;background:#7d7873"></div>
<span class="t" style="left:71.30px;top:635.93px;font-size:14.80px;line-height:14.80px;color:#3e5a86;transform:scaleX(0.9451);">View</span>
<span class="t" style="left:150.30px;top:635.93px;font-size:14.80px;line-height:14.80px;color:#444444;transform:scaleX(0.9335);">Cost of Revenue : Cost of Sales</span>
<span class="t" style="left:824.40px;top:635.93px;font-size:14.80px;line-height:14.80px;color:#444444;transform:scaleX(0.8855);">FY 2023</span>
<span class="t" style="left:931.90px;top:635.93px;font-size:14.80px;line-height:14.80px;color:#444444;transform:scaleX(0.9438);">Parent Company : US West</span>
<span class="t" style="left:1193.00px;top:635.93px;font-size:14.80px;line-height:14.80px;color:#444444;transform:scaleX(0.9480);">Professional Services</span>
<span class="t" style="left:1409.10px;top:635.93px;font-size:14.80px;line-height:14.80px;color:#444444;transform:scaleX(0.8858);">Class-A</span>
<span class="t" style="left:1765.00px;top:635.93px;font-size:14.80px;line-height:14.80px;color:#444444;transform:scaleX(0.9316);">US Dollar</span>
<span class="t" style="left:1934.50px;top:635.93px;font-size:14.80px;line-height:14.80px;color:#444444;transform:scaleX(0.9288);">436,940.23</span>
<span class="t" style="left:2039.00px;top:635.93px;font-size:14.80px;line-height:14.80px;color:#444444;transform:scaleX(0.9532);">Local Currency Budget</span>
<span class="t" style="left:2266.30px;top:635.93px;font-size:14.80px;line-height:14.80px;color:#444444;transform:scaleX(0.9527);">No</span>
<span class="t" style="left:32.60px;top:665.54px;font-size:14.80px;line-height:14.80px;color:#3e5a86;transform:scaleX(0.9372);">Edit</span>
<div class="r" style="left:63.2px;top:668.41px;width:1.3px;height:13.8px;background:#7d7873"></div>
<span class="t" style="left:71.30px;top:665.54px;font-size:14.80px;line-height:14.80px;color:#3e5a86;transform:scaleX(0.9451);">View</span>
<span class="t" style="left:150.30px;top:665.54px;font-size:14.80px;line-height:14.80px;color:#444444;transform:scaleX(0.9335);">Cost of Revenue : Cost of Sales</span>
<span class="t" style="left:824.40px;top:665.54px;font-size:14.80px;line-height:14.80px;color:#444444;transform:scaleX(0.8855);">FY 2023</span>
<span class="t" style="left:931.90px;top:665.54px;font-size:14.80px;line-height:14.80px;color:#444444;transform:scaleX(0.9438);">Parent Company : US West</span>
<span class="t" style="left:1193.00px;top:665.54px;font-size:14.80px;line-height:14.80px;color:#444444;transform:scaleX(0.9480);">Professional Services</span>
<span class="t" style="left:1409.10px;top:665.54px;font-size:14.80px;line-height:14.80px;color:#444444;transform:scaleX(0.8858);">Class-C</span>
<span class="t" style="left:1765.00px;top:665.54px;font-size:14.80px;line-height:14.80px;color:#444444;transform:scaleX(0.9316);">US Dollar</span>
<span class="t" style="left:1934.50px;top:665.54px;font-size:14.80px;line-height:14.80px;color:#444444;transform:scaleX(0.9288);">301,267.69</span>
<span class="t" style="left:2039.00px;top:665.54px;font-size:14.80px;line-height:14.80px;color:#444444;transform:scaleX(0.9532);">Local Currency Budget</span>
<span class="t" style="left:2266.30px;top:665.54px;font-size:14.80px;line-height:14.80px;color:#444444;transform:scaleX(0.9527);">No</span>
<span class="t" style="left:32.60px;top:695.15px;font-size:14.80px;line-height:14.80px;color:#3e5a86;transform:scaleX(0.9372);">Edit</span>
<div class="r" style="left:63.2px;top:698.02px;width:1.3px;height:13.8px;background:#7d7873"></div>
<span class="t" style="left:71.30px;top:695.15px;font-size:14.80px;line-height:14.80px;color:#3e5a86;transform:scaleX(0.9451);">View</span>
<span class="t" style="left:150.30px;top:695.15px;font-size:14.80px;line-height:14.80px;color:#444444;transform:scaleX(0.9264);">Expenses : G&amp;A Expenses : Bank Service Charges</span>
<span class="t" style="left:824.40px;top:695.15px;font-size:14.80px;line-height:14.80px;color:#444444;transform:scaleX(0.8855);">FY 2025</span>
<span class="t" style="left:931.90px;top:695.15px;font-size:14.80px;line-height:14.80px;color:#444444;transform:scaleX(0.9438);">Parent Company : US West</span>
<span class="t" style="left:1193.00px;top:695.15px;font-size:14.80px;line-height:14.80px;color:#444444;transform:scaleX(1.0174);">Administration</span>
<span class="t" style="left:1765.00px;top:695.15px;font-size:14.80px;line-height:14.80px;color:#444444;transform:scaleX(0.9316);">US Dollar</span>
<span class="t" style="left:1961.25px;top:695.15px;font-size:14.80px;line-height:14.80px;color:#444444;transform:scaleX(0.9288);">430.03</span>
<span class="t" style="left:2039.00px;top:695.15px;font-size:14.80px;line-height:14.80px;color:#444444;transform:scaleX(0.9532);">Local Currency Budget</span>
<span class="t" style="left:2266.30px;top:695.15px;font-size:14.80px;line-height:14.80px;color:#444444;transform:scaleX(0.9527);">No</span>
<span class="t" style="left:32.60px;top:724.76px;font-size:14.80px;line-height:14.80px;color:#3e5a86;transform:scaleX(0.9372);">Edit</span>
<div class="r" style="left:63.2px;top:727.63px;width:1.3px;height:13.8px;background:#7d7873"></div>
<span class="t" style="left:71.30px;top:724.76px;font-size:14.80px;line-height:14.80px;color:#3e5a86;transform:scaleX(0.9451);">View</span>
<span class="t" style="left:150.30px;top:724.76px;font-size:14.80px;line-height:14.80px;color:#444444;transform:scaleX(0.9264);">Expenses : G&amp;A Expenses : Bank Service Charges</span>
<span class="t" style="left:824.40px;top:724.76px;font-size:14.80px;line-height:14.80px;color:#444444;transform:scaleX(0.8855);">FY 2024</span>
<span class="t" style="left:931.90px;top:724.76px;font-size:14.80px;line-height:14.80px;color:#444444;transform:scaleX(0.9438);">Parent Company : US West</span>
<span class="t" style="left:1193.00px;top:724.76px;font-size:14.80px;line-height:14.80px;color:#444444;transform:scaleX(1.0174);">Administration</span>
<span class="t" style="left:1765.00px;top:724.76px;font-size:14.80px;line-height:14.80px;color:#444444;transform:scaleX(0.9316);">US Dollar</span>
<span class="t" style="left:1949.79px;top:724.76px;font-size:14.80px;line-height:14.80px;color:#444444;transform:scaleX(0.9288);">6,450.45</span>
<span class="t" style="left:2039.00px;top:724.76px;font-size:14.80px;line-height:14.80px;color:#444444;transform:scaleX(0.9532);">Local Currency Budget</span>
<span class="t" style="left:2266.30px;top:724.76px;font-size:14.80px;line-height:14.80px;color:#444444;transform:scaleX(0.9527);">No</span>
<span class="t" style="left:32.60px;top:754.37px;font-size:14.80px;line-height:14.80px;color:#3e5a86;transform:scaleX(0.9372);">Edit</span>
<div class="r" style="left:63.2px;top:757.24px;width:1.3px;height:13.8px;background:#7d7873"></div>
<span class="t" style="left:71.30px;top:754.37px;font-size:14.80px;line-height:14.80px;color:#3e5a86;transform:scaleX(0.9451);">View</span>
<span class="t" style="left:150.30px;top:754.37px;font-size:14.80px;line-height:14.80px;color:#444444;transform:scaleX(0.9264);">Expenses : G&amp;A Expenses : Bank Service Charges</span>
<span class="t" style="left:824.40px;top:754.37px;font-size:14.80px;line-height:14.80px;color:#444444;transform:scaleX(0.8855);">FY 2023</span>
<span class="t" style="left:931.90px;top:754.37px;font-size:14.80px;line-height:14.80px;color:#444444;transform:scaleX(0.9438);">Parent Company : US West</span>
<span class="t" style="left:1193.00px;top:754.37px;font-size:14.80px;line-height:14.80px;color:#444444;transform:scaleX(1.0174);">Administration</span>
<span class="t" style="left:1765.00px;top:754.37px;font-size:14.80px;line-height:14.80px;color:#444444;transform:scaleX(0.9316);">US Dollar</span>
<span class="t" style="left:1949.79px;top:754.37px;font-size:14.80px;line-height:14.80px;color:#444444;transform:scaleX(0.9288);">5,998.92</span>
<span class="t" style="left:2039.00px;top:754.37px;font-size:14.80px;line-height:14.80px;color:#444444;transform:scaleX(0.9532);">Local Currency Budget</span>
<span class="t" style="left:2266.30px;top:754.37px;font-size:14.80px;line-height:14.80px;color:#444444;transform:scaleX(0.9527);">No</span>
<span class="t" style="left:32.60px;top:783.98px;font-size:14.80px;line-height:14.80px;color:#3e5a86;transform:scaleX(0.9372);">Edit</span>
<div class="r" style="left:63.2px;top:786.85px;width:1.3px;height:13.8px;background:#7d7873"></div>
<span class="t" style="left:71.30px;top:783.98px;font-size:14.80px;line-height:14.80px;color:#3e5a86;transform:scaleX(0.9451);">View</span>
<span class="t" style="left:150.30px;top:783.98px;font-size:14.80px;line-height:14.80px;color:#444444;transform:scaleX(0.9500);">Expenses : G&amp;A Expenses : Contributions</span>
<span class="t" style="left:824.40px;top:783.98px;font-size:14.80px;line-height:14.80px;color:#444444;transform:scaleX(0.8855);">FY 2025</span>
<span class="t" style="left:931.90px;top:783.98px;font-size:14.80px;line-height:14.80px;color:#444444;transform:scaleX(0.9438);">Parent Company : US West</span>
<span class="t" style="left:1193.00px;top:783.98px;font-size:14.80px;line-height:14.80px;color:#444444;transform:scaleX(1.0174);">Administration</span>
<span class="t" style="left:1765.00px;top:783.98px;font-size:14.80px;line-height:14.80px;color:#444444;transform:scaleX(0.9316);">US Dollar</span>
<span class="t" style="left:1949.79px;top:783.98px;font-size:14.80px;line-height:14.80px;color:#444444;transform:scaleX(0.9288);">1,057.60</span>
<span class="t" style="left:2039.00px;top:783.98px;font-size:14.80px;line-height:14.80px;color:#444444;transform:scaleX(0.9532);">Local Currency Budget</span>
<span class="t" style="left:2266.30px;top:783.98px;font-size:14.80px;line-height:14.80px;color:#444444;transform:scaleX(0.9527);">No</span>
<span class="t" style="left:32.60px;top:813.59px;font-size:14.80px;line-height:14.80px;color:#3e5a86;transform:scaleX(0.9372);">Edit</span>
<div class="r" style="left:63.2px;top:816.46px;width:1.3px;height:13.8px;background:#7d7873"></div>
<span class="t" style="left:71.30px;top:813.59px;font-size:14.80px;line-height:14.80px;color:#3e5a86;transform:scaleX(0.9451);">View</span>
<span class="t" style="left:150.30px;top:813.59px;font-size:14.80px;line-height:14.80px;color:#444444;transform:scaleX(0.9500);">Expenses : G&amp;A Expenses : Contributions</span>
<span class="t" style="left:824.40px;top:813.59px;font-size:14.80px;line-height:14.80px;color:#444444;transform:scaleX(0.8855);">FY 2024</span>
<span class="t" style="left:931.90px;top:813.59px;font-size:14.80px;line-height:14.80px;color:#444444;transform:scaleX(0.9438);">Parent Company : US West</span>
<span class="t" style="left:1193.00px;top:813.59px;font-size:14.80px;line-height:14.80px;color:#444444;transform:scaleX(1.0174);">Administration</span>
<span class="t" style="left:1765.00px;top:813.59px;font-size:14.80px;line-height:14.80px;color:#444444;transform:scaleX(0.9316);">US Dollar</span>
<span class="t" style="left:1942.14px;top:813.59px;font-size:14.80px;line-height:14.80px;color:#444444;transform:scaleX(0.9288);">15,864.00</span>
<span class="t" style="left:2039.00px;top:813.59px;font-size:14.80px;line-height:14.80px;color:#444444;transform:scaleX(0.9532);">Local Currency Budget</span>
<span class="t" style="left:2266.30px;top:813.59px;font-size:14.80px;line-height:14.80px;color:#444444;transform:scaleX(0.9527);">No</span>
<span class="t" style="left:32.60px;top:843.20px;font-size:14.80px;line-height:14.80px;color:#3e5a86;transform:scaleX(0.9372);">Edit</span>
<div class="r" style="left:63.2px;top:846.07px;width:1.3px;height:13.8px;background:#7d7873"></div>
<span class="t" style="left:71.30px;top:843.20px;font-size:14.80px;line-height:14.80px;color:#3e5a86;transform:scaleX(0.9451);">View</span>
<span class="t" style="left:150.30px;top:843.20px;font-size:14.80px;line-height:14.80px;color:#444444;transform:scaleX(0.9500);">Expenses : G&amp;A Expenses : Contributions</span>
<span class="t" style="left:824.40px;top:843.20px;font-size:14.80px;line-height:14.80px;color:#444444;transform:scaleX(0.8855);">FY 2023</span>
<span class="t" style="left:931.90px;top:843.20px;font-size:14.80px;line-height:14.80px;color:#444444;transform:scaleX(0.9438);">Parent Company : US West</span>
<span class="t" style="left:1193.00px;top:843.20px;font-size:14.80px;line-height:14.80px;color:#444444;transform:scaleX(1.0174);">Administration</span>
<span class="t" style="left:1765.00px;top:843.20px;font-size:14.80px;line-height:14.80px;color:#444444;transform:scaleX(0.9316);">US Dollar</span>
<span class="t" style="left:1942.14px;top:843.20px;font-size:14.80px;line-height:14.80px;color:#444444;transform:scaleX(0.9288);">14,753.52</span>
<span class="t" style="left:2039.00px;top:843.20px;font-size:14.80px;line-height:14.80px;color:#444444;transform:scaleX(0.9532);">Local Currency Budget</span>
<span class="t" style="left:2266.30px;top:843.20px;font-size:14.80px;line-height:14.80px;color:#444444;transform:scaleX(0.9527);">No</span>
<span class="t" style="left:32.60px;top:872.81px;font-size:14.80px;line-height:14.80px;color:#3e5a86;transform:scaleX(0.9372);">Edit</span>
<div class="r" style="left:63.2px;top:875.68px;width:1.3px;height:13.8px;background:#7d7873"></div>
<span class="t" style="left:71.30px;top:872.81px;font-size:14.80px;line-height:14.80px;color:#3e5a86;transform:scaleX(0.9451);">View</span>
<span class="t" style="left:150.30px;top:872.81px;font-size:14.80px;line-height:14.80px;color:#444444;transform:scaleX(0.9425);">Expenses : G&amp;A Expenses : Dues &amp; Subscriptions</span>
<span class="t" style="left:824.40px;top:872.81px;font-size:14.80px;line-height:14.80px;color:#444444;transform:scaleX(0.8855);">FY 2025</span>
<span class="t" style="left:931.90px;top:872.81px;font-size:14.80px;line-height:14.80px;color:#444444;transform:scaleX(0.9438);">Parent Company : US West</span>
<span class="t" style="left:1193.00px;top:872.81px;font-size:14.80px;line-height:14.80px;color:#444444;transform:scaleX(1.0174);">Administration</span>
<span class="t" style="left:1765.00px;top:872.81px;font-size:14.80px;line-height:14.80px;color:#444444;transform:scaleX(0.9316);">US Dollar</span>
<span class="t" style="left:1961.25px;top:872.81px;font-size:14.80px;line-height:14.80px;color:#444444;transform:scaleX(0.9288);">426.60</span>
<span class="t" style="left:2039.00px;top:872.81px;font-size:14.80px;line-height:14.80px;color:#444444;transform:scaleX(0.9532);">Local Currency Budget</span>
<span class="t" style="left:2266.30px;top:872.81px;font-size:14.80px;line-height:14.80px;color:#444444;transform:scaleX(0.9527);">No</span>
<span class="t" style="left:32.60px;top:902.42px;font-size:14.80px;line-height:14.80px;color:#3e5a86;transform:scaleX(0.9372);">Edit</span>
<div class="r" style="left:63.2px;top:905.29px;width:1.3px;height:13.8px;background:#7d7873"></div>
<span class="t" style="left:71.30px;top:902.42px;font-size:14.80px;line-height:14.80px;color:#3e5a86;transform:scaleX(0.9451);">View</span>
<span class="t" style="left:150.30px;top:902.42px;font-size:14.80px;line-height:14.80px;color:#444444;transform:scaleX(0.9425);">Expenses : G&amp;A Expenses : Dues &amp; Subscriptions</span>
<span class="t" style="left:824.40px;top:902.42px;font-size:14.80px;line-height:14.80px;color:#444444;transform:scaleX(0.8855);">FY 2024</span>
<span class="t" style="left:931.90px;top:902.42px;font-size:14.80px;line-height:14.80px;color:#444444;transform:scaleX(0.9438);">Parent Company : US West</span>
<span class="t" style="left:1193.00px;top:902.42px;font-size:14.80px;line-height:14.80px;color:#444444;transform:scaleX(1.0174);">Administration</span>
<span class="t" style="left:1765.00px;top:902.42px;font-size:14.80px;line-height:14.80px;color:#444444;transform:scaleX(0.9316);">US Dollar</span>
<span class="t" style="left:1949.79px;top:902.42px;font-size:14.80px;line-height:14.80px;color:#444444;transform:scaleX(0.9288);">6,399.00</span>
<span class="t" style="left:2039.00px;top:902.42px;font-size:14.80px;line-height:14.80px;color:#444444;transform:scaleX(0.9532);">Local Currency Budget</span>
<span class="t" style="left:2266.30px;top:902.42px;font-size:14.80px;line-height:14.80px;color:#444444;transform:scaleX(0.9527);">No</span>
<span class="t" style="left:32.60px;top:932.03px;font-size:14.80px;line-height:14.80px;color:#3e5a86;transform:scaleX(0.9372);">Edit</span>
<div class="r" style="left:63.2px;top:934.90px;width:1.3px;height:13.8px;background:#7d7873"></div>
<span class="t" style="left:71.30px;top:932.03px;font-size:14.80px;line-height:14.80px;color:#3e5a86;transform:scaleX(0.9451);">View</span>
<span class="t" style="left:150.30px;top:932.03px;font-size:14.80px;line-height:14.80px;color:#444444;transform:scaleX(0.9425);">Expenses : G&amp;A Expenses : Dues &amp; Subscriptions</span>
<span class="t" style="left:824.40px;top:932.03px;font-size:14.80px;line-height:14.80px;color:#444444;transform:scaleX(0.8855);">FY 2023</span>
<span class="t" style="left:931.90px;top:932.03px;font-size:14.80px;line-height:14.80px;color:#444444;transform:scaleX(0.9438);">Parent Company : US West</span>
<span class="t" style="left:1193.00px;top:932.03px;font-size:14.80px;line-height:14.80px;color:#444444;transform:scaleX(1.0174);">Administration</span>
<span class="t" style="left:1765.00px;top:932.03px;font-size:14.80px;line-height:14.80px;color:#444444;transform:scaleX(0.9316);">US Dollar</span>
<span class="t" style="left:1949.79px;top:932.03px;font-size:14.80px;line-height:14.80px;color:#444444;transform:scaleX(0.9288);">5,951.07</span>
<span class="t" style="left:2039.00px;top:932.03px;font-size:14.80px;line-height:14.80px;color:#444444;transform:scaleX(0.9532);">Local Currency Budget</span>
<span class="t" style="left:2266.30px;top:932.03px;font-size:14.80px;line-height:14.80px;color:#444444;transform:scaleX(0.9527);">No</span>
<span class="t" style="left:32.60px;top:961.64px;font-size:14.80px;line-height:14.80px;color:#3e5a86;transform:scaleX(0.9372);">Edit</span>
<div class="r" style="left:63.2px;top:964.51px;width:1.3px;height:13.8px;background:#7d7873"></div>
<span class="t" style="left:71.30px;top:961.64px;font-size:14.80px;line-height:14.80px;color:#3e5a86;transform:scaleX(0.9451);">View</span>
<span class="t" style="left:150.30px;top:961.64px;font-size:14.80px;line-height:14.80px;color:#444444;transform:scaleX(0.9439);">Expenses : G&amp;A Expenses : Facilities Related Expenses : Building Maintenance</span>
<span class="t" style="left:824.40px;top:961.64px;font-size:14.80px;line-height:14.80px;color:#444444;transform:scaleX(0.8855);">FY 2025</span>
<span class="t" style="left:931.90px;top:961.64px;font-size:14.80px;line-height:14.80px;color:#444444;transform:scaleX(0.9438);">Parent Company : US West</span>
<span class="t" style="left:1193.00px;top:961.64px;font-size:14.80px;line-height:14.80px;color:#444444;transform:scaleX(0.9945);">Operations</span>
<span class="t" style="left:1765.00px;top:961.64px;font-size:14.80px;line-height:14.80px;color:#444444;transform:scaleX(0.9316);">US Dollar</span>
<span class="t" style="left:1949.79px;top:961.64px;font-size:14.80px;line-height:14.80px;color:#444444;transform:scaleX(0.9288);">1,099.76</span>
<span class="t" style="left:2039.00px;top:961.64px;font-size:14.80px;line-height:14.80px;color:#444444;transform:scaleX(0.9532);">Local Currency Budget</span>
<span class="t" style="left:2266.30px;top:961.64px;font-size:14.80px;line-height:14.80px;color:#444444;transform:scaleX(0.9527);">No</span>
<span class="t" style="left:32.60px;top:991.25px;font-size:14.80px;line-height:14.80px;color:#3e5a86;transform:scaleX(0.9372);">Edit</span>
<div class="r" style="left:63.2px;top:994.12px;width:1.3px;height:13.8px;background:#7d7873"></div>
<span class="t" style="left:71.30px;top:991.25px;font-size:14.80px;line-height:14.80px;color:#3e5a86;transform:scaleX(0.9451);">View</span>
<span class="t" style="left:150.30px;top:991.25px;font-size:14.80px;line-height:14.80px;color:#444444;transform:scaleX(0.9439);">Expenses : G&amp;A Expenses : Facilities Related Expenses : Building Maintenance</span>
<span class="t" style="left:824.40px;top:991.25px;font-size:14.80px;line-height:14.80px;color:#444444;transform:scaleX(0.8855);">FY 2024</span>
<span class="t" style="left:931.90px;top:991.25px;font-size:14.80px;line-height:14.80px;color:#444444;transform:scaleX(0.9438);">Parent Company : US West</span>
<span class="t" style="left:1193.00px;top:991.25px;font-size:14.80px;line-height:14.80px;color:#444444;transform:scaleX(0.9945);">Operations</span>
<span class="t" style="left:1765.00px;top:991.25px;font-size:14.80px;line-height:14.80px;color:#444444;transform:scaleX(0.9316);">US Dollar</span>
<span class="t" style="left:1942.14px;top:991.25px;font-size:14.80px;line-height:14.80px;color:#444444;transform:scaleX(0.9288);">16,496.40</span>
<span class="t" style="left:2039.00px;top:991.25px;font-size:14.80px;line-height:14.80px;color:#444444;transform:scaleX(0.9532);">Local Currency Budget</span>
<span class="t" style="left:2266.30px;top:991.25px;font-size:14.80px;line-height:14.80px;color:#444444;transform:scaleX(0.9527);">No</span>
<span class="t" style="left:32.60px;top:1020.86px;font-size:14.80px;line-height:14.80px;color:#3e5a86;transform:scaleX(0.9372);">Edit</span>
<div class="r" style="left:63.2px;top:1023.73px;width:1.3px;height:13.8px;background:#7d7873"></div>
<span class="t" style="left:71.30px;top:1020.86px;font-size:14.80px;line-height:14.80px;color:#3e5a86;transform:scaleX(0.9451);">View</span>
<span class="t" style="left:150.30px;top:1020.86px;font-size:14.80px;line-height:14.80px;color:#444444;transform:scaleX(0.9439);">Expenses : G&amp;A Expenses : Facilities Related Expenses : Building Maintenance</span>
<span class="t" style="left:824.40px;top:1020.86px;font-size:14.80px;line-height:14.80px;color:#444444;transform:scaleX(0.8855);">FY 2023</span>
<span class="t" style="left:931.90px;top:1020.86px;font-size:14.80px;line-height:14.80px;color:#444444;transform:scaleX(0.9438);">Parent Company : US West</span>
<span class="t" style="left:1193.00px;top:1020.86px;font-size:14.80px;line-height:14.80px;color:#444444;transform:scaleX(0.9945);">Operations</span>
<span class="t" style="left:1765.00px;top:1020.86px;font-size:14.80px;line-height:14.80px;color:#444444;transform:scaleX(0.9316);">US Dollar</span>
<span class="t" style="left:1942.14px;top:1020.86px;font-size:14.80px;line-height:14.80px;color:#444444;transform:scaleX(0.9288);">15,341.65</span>
<span class="t" style="left:2039.00px;top:1020.86px;font-size:14.80px;line-height:14.80px;color:#444444;transform:scaleX(0.9532);">Local Currency Budget</span>
<span class="t" style="left:2266.30px;top:1020.86px;font-size:14.80px;line-height:14.80px;color:#444444;transform:scaleX(0.9527);">No</span>
<span class="t" style="left:32.60px;top:1050.47px;font-size:14.80px;line-height:14.80px;color:#3e5a86;transform:scaleX(0.9372);">Edit</span>
<div class="r" style="left:63.2px;top:1053.34px;width:1.3px;height:13.8px;background:#7d7873"></div>
<span class="t" style="left:71.30px;top:1050.47px;font-size:14.80px;line-height:14.80px;color:#3e5a86;transform:scaleX(0.9451);">View</span>
<span class="t" style="left:150.30px;top:1050.47px;font-size:14.80px;line-height:14.80px;color:#444444;transform:scaleX(0.9352);">Expenses : G&amp;A Expenses : Facilities Related Expenses : Electricity</span>
<span class="t" style="left:824.40px;top:1050.47px;font-size:14.80px;line-height:14.80px;color:#444444;transform:scaleX(0.8855);">FY 2025</span>
<span class="t" style="left:931.90px;top:1050.47px;font-size:14.80px;line-height:14.80px;color:#444444;transform:scaleX(0.9438);">Parent Company : US West</span>
<span class="t" style="left:1193.00px;top:1050.47px;font-size:14.80px;line-height:14.80px;color:#444444;transform:scaleX(0.9945);">Operations</span>
<span class="t" style="left:1765.00px;top:1050.47px;font-size:14.80px;line-height:14.80px;color:#444444;transform:scaleX(0.9316);">US Dollar</span>
<span class="t" style="left:1961.25px;top:1050.47px;font-size:14.80px;line-height:14.80px;color:#444444;transform:scaleX(0.9288);">688.32</span>
<span class="t" style="left:2039.00px;top:1050.47px;font-size:14.80px;line-height:14.80px;color:#444444;transform:scaleX(0.9532);">Local Currency Budget</span>
<span class="t" style="left:2266.30px;top:1050.47px;font-size:14.80px;line-height:14.80px;color:#444444;transform:scaleX(0.9527);">No</span>
<span class="t" style="left:32.60px;top:1080.08px;font-size:14.80px;line-height:14.80px;color:#3e5a86;transform:scaleX(0.9372);">Edit</span>
<div class="r" style="left:63.2px;top:1082.95px;width:1.3px;height:13.8px;background:#7d7873"></div>
<span class="t" style="left:71.30px;top:1080.08px;font-size:14.80px;line-height:14.80px;color:#3e5a86;transform:scaleX(0.9451);">View</span>
<span class="t" style="left:150.30px;top:1080.08px;font-size:14.80px;line-height:14.80px;color:#444444;transform:scaleX(0.9352);">Expenses : G&amp;A Expenses : Facilities Related Expenses : Electricity</span>
<span class="t" style="left:824.40px;top:1080.08px;font-size:14.80px;line-height:14.80px;color:#444444;transform:scaleX(0.8855);">FY 2024</span>
<span class="t" style="left:931.90px;top:1080.08px;font-size:14.80px;line-height:14.80px;color:#444444;transform:scaleX(0.9438);">Parent Company : US West</span>
<span class="t" style="left:1193.00px;top:1080.08px;font-size:14.80px;line-height:14.80px;color:#444444;transform:scaleX(0.9945);">Operations</span>
<span class="t" style="left:1765.00px;top:1080.08px;font-size:14.80px;line-height:14.80px;color:#444444;transform:scaleX(0.9316);">US Dollar</span>
<span class="t" style="left:1942.14px;top:1080.08px;font-size:14.80px;line-height:14.80px;color:#444444;transform:scaleX(0.9288);">10,324.80</span>
<span class="t" style="left:2039.00px;top:1080.08px;font-size:14.80px;line-height:14.80px;color:#444444;transform:scaleX(0.9532);">Local Currency Budget</span>
<span class="t" style="left:2266.30px;top:1080.08px;font-size:14.80px;line-height:14.80px;color:#444444;transform:scaleX(0.9527);">No</span>
<span class="t" style="left:32.60px;top:1109.69px;font-size:14.80px;line-height:14.80px;color:#3e5a86;transform:scaleX(0.9372);">Edit</span>
<div class="r" style="left:63.2px;top:1112.56px;width:1.3px;height:13.8px;background:#7d7873"></div>
<span class="t" style="left:71.30px;top:1109.69px;font-size:14.80px;line-height:14.80px;color:#3e5a86;transform:scaleX(0.9451);">View</span>
<span class="t" style="left:150.30px;top:1109.69px;font-size:14.80px;line-height:14.80px;color:#444444;transform:scaleX(0.9352);">Expenses : G&amp;A Expenses : Facilities Related Expenses : Electricity</span>
<span class="t" style="left:824.40px;top:1109.69px;font-size:14.80px;line-height:14.80px;color:#444444;transform:scaleX(0.8855);">FY 2023</span>
<span class="t" style="left:931.90px;top:1109.69px;font-size:14.80px;line-height:14.80px;color:#444444;transform:scaleX(0.9438);">Parent Company : US West</span>
<span class="t" style="left:1193.00px;top:1109.69px;font-size:14.80px;line-height:14.80px;color:#444444;transform:scaleX(0.9945);">Operations</span>
<span class="t" style="left:1765.00px;top:1109.69px;font-size:14.80px;line-height:14.80px;color:#444444;transform:scaleX(0.9316);">US Dollar</span>
<span class="t" style="left:1949.79px;top:1109.69px;font-size:14.80px;line-height:14.80px;color:#444444;transform:scaleX(0.9288);">9,602.06</span>
<span class="t" style="left:2039.00px;top:1109.69px;font-size:14.80px;line-height:14.80px;color:#444444;transform:scaleX(0.9532);">Local Currency Budget</span>
<span class="t" style="left:2266.30px;top:1109.69px;font-size:14.80px;line-height:14.80px;color:#444444;transform:scaleX(0.9527);">No</span>
<span class="t" style="left:32.60px;top:1139.30px;font-size:14.80px;line-height:14.80px;color:#3e5a86;transform:scaleX(0.9372);">Edit</span>
<div class="r" style="left:63.2px;top:1142.17px;width:1.3px;height:13.8px;background:#7d7873"></div>
<span class="t" style="left:71.30px;top:1139.30px;font-size:14.80px;line-height:14.80px;color:#3e5a86;transform:scaleX(0.9451);">View</span>
<span class="t" style="left:150.30px;top:1139.30px;font-size:14.80px;line-height:14.80px;color:#444444;transform:scaleX(0.9397);">Expenses : G&amp;A Expenses : Facilities Related Expenses : Equipment Rental</span>
<span class="t" style="left:824.40px;top:1139.30px;font-size:14.80px;line-height:14.80px;color:#444444;transform:scaleX(0.8855);">FY 2025</span>
<span class="t" style="left:931.90px;top:1139.30px;font-size:14.80px;line-height:14.80px;color:#444444;transform:scaleX(0.9438);">Parent Company : US West</span>
<span class="t" style="left:1193.00px;top:1139.30px;font-size:14.80px;line-height:14.80px;color:#444444;transform:scaleX(0.9945);">Operations</span>
<span class="t" style="left:1765.00px;top:1139.30px;font-size:14.80px;line-height:14.80px;color:#444444;transform:scaleX(0.9316);">US Dollar</span>
<span class="t" style="left:1961.25px;top:1139.30px;font-size:14.80px;line-height:14.80px;color:#444444;transform:scaleX(0.9288);">844.58</span>
<span class="t" style="left:2039.00px;top:1139.30px;font-size:14.80px;line-height:14.80px;color:#444444;transform:scaleX(0.9532);">Local Currency Budget</span>
<span class="t" style="left:2266.30px;top:1139.30px;font-size:14.80px;line-height:14.80px;color:#444444;transform:scaleX(0.9527);">No</span>
<span class="t" style="left:32.60px;top:1168.91px;font-size:14.80px;line-height:14.80px;color:#3e5a86;transform:scaleX(0.9372);">Edit</span>
<div class="r" style="left:63.2px;top:1171.78px;width:1.3px;height:13.8px;background:#7d7873"></div>
<span class="t" style="left:71.30px;top:1168.91px;font-size:14.80px;line-height:14.80px;color:#3e5a86;transform:scaleX(0.9451);">View</span>
<span class="t" style="left:150.30px;top:1168.91px;font-size:14.80px;line-height:14.80px;color:#444444;transform:scaleX(0.9397);">Expenses : G&amp;A Expenses : Facilities Related Expenses : Equipment Rental</span>
<span class="t" style="left:824.40px;top:1168.91px;font-size:14.80px;line-height:14.80px;color:#444444;transform:scaleX(0.8855);">FY 2024</span>
<span class="t" style="left:931.90px;top:1168.91px;font-size:14.80px;line-height:14.80px;color:#444444;transform:scaleX(0.9438);">Parent Company : US West</span>
<span class="t" style="left:1193.00px;top:1168.91px;font-size:14.80px;line-height:14.80px;color:#444444;transform:scaleX(0.9945);">Operations</span>
<span class="t" style="left:1765.00px;top:1168.91px;font-size:14.80px;line-height:14.80px;color:#444444;transform:scaleX(0.9316);">US Dollar</span>
<span class="t" style="left:1942.14px;top:1168.91px;font-size:14.80px;line-height:14.80px;color:#444444;transform:scaleX(0.9288);">12,668.70</span>
<span class="t" style="left:2039.00px;top:1168.91px;font-size:14.80px;line-height:14.80px;color:#444444;transform:scaleX(0.9532);">Local Currency Budget</span>
<span class="t" style="left:2266.30px;top:1168.91px;font-size:14.80px;line-height:14.80px;color:#444444;transform:scaleX(0.9527);">No</span>
<span class="t" style="left:32.60px;top:1198.52px;font-size:14.80px;line-height:14.80px;color:#3e5a86;transform:scaleX(0.9372);">Edit</span>
<div class="r" style="left:63.2px;top:1201.39px;width:1.3px;height:13.8px;background:#7d7873"></div>
<span class="t" style="left:71.30px;top:1198.52px;font-size:14.80px;line-height:14.80px;color:#3e5a86;transform:scaleX(0.9451);">View</span>
<span class="t" style="left:150.30px;top:1198.52px;font-size:14.80px;line-height:14.80px;color:#444444;transform:scaleX(0.9397);">Expenses : G&amp;A Expenses : Facilities Related Expenses : Equipment Rental</span>
<span class="t" style="left:824.40px;top:1198.52px;font-size:14.80px;line-height:14.80px;color:#444444;transform:scaleX(0.8855);">FY 2023</span>
<span class="t" style="left:931.90px;top:1198.52px;font-size:14.80px;line-height:14.80px;color:#444444;transform:scaleX(0.9438);">Parent Company : US West</span>
<span class="t" style="left:1193.00px;top:1198.52px;font-size:14.80px;line-height:14.80px;color:#444444;transform:scaleX(0.9945);">Operations</span>
<span class="t" style="left:1765.00px;top:1198.52px;font-size:14.80px;line-height:14.80px;color:#444444;transform:scaleX(0.9316);">US Dollar</span>
<span class="t" style="left:1943.16px;top:1198.52px;font-size:14.80px;line-height:14.80px;color:#444444;transform:scaleX(0.9288);">11,781.89</span>
<span class="t" style="left:2039.00px;top:1198.52px;font-size:14.80px;line-height:14.80px;color:#444444;transform:scaleX(0.9532);">Local Currency Budget</span>
<span class="t" style="left:2266.30px;top:1198.52px;font-size:14.80px;line-height:14.80px;color:#444444;transform:scaleX(0.9527);">No</span>
<div class="r" style="left:2434px;top:298px;width:22px;height:915px;background:#f1f1f1"></div>
<div class="r" style="left:2437px;top:320px;width:17px;height:527px;background:#c1c1c1"></div>
<svg class="r" style="left:2440px;top:307px" width="11" height="7" viewBox="0 0 11 7"><path d="M0.5 6.5 L5.5 0.5 L10.5 6.5Z" fill="#a3a3a3"/></svg>
<svg class="r" style="left:2440px;top:1199px" width="11" height="7" viewBox="0 0 11 7"><path d="M0.5 0.5 L5.5 6.5 L10.5 0.5Z" fill="#505050"/></svg>
<svg class="r" style="left:2382px;top:477px" width="52" height="94" viewBox="0 0 52 94">
<defs><filter id="sh" x="-30%" y="-20%" width="160%" height="140%"><feDropShadow dx="0" dy="2" stdDeviation="2" flood-color="#000" flood-opacity="0.3"/></filter></defs>
<rect x="4" y="3" width="41.5" height="83" rx="20.7" fill="#29536a" filter="url(#sh)"/>
<circle cx="24" cy="23.5" r="12.5" fill="none" stroke="#b8d0de" stroke-width="1.8"/>
<circle cx="25.9" cy="17.4" r="1.3" fill="#b8d0de"/>
<path d="M22.6 21.6 H25.6 L23.6 28 Q23.3 29.2 24.6 28.5 L25.6 27.9" fill="none" stroke="#b8d0de" stroke-width="2" stroke-linejoin="round" stroke-linecap="round"/>
<circle cx="17" cy="51.5" r="2.3" fill="#8aa7ba"/><circle cx="17" cy="60" r="2.3" fill="#8aa7ba"/><circle cx="17" cy="68.5" r="2.3" fill="#8aa7ba"/><circle cx="25.5" cy="51.5" r="2.3" fill="#8aa7ba"/><circle cx="25.5" cy="60" r="2.3" fill="#8aa7ba"/><circle cx="25.5" cy="68.5" r="2.3" fill="#8aa7ba"/><circle cx="34" cy="51.5" r="2.3" fill="#8aa7ba"/><circle cx="34" cy="60" r="2.3" fill="#8aa7ba"/><circle cx="34" cy="68.5" r="2.3" fill="#8aa7ba"/>
</svg>
</body></html>
